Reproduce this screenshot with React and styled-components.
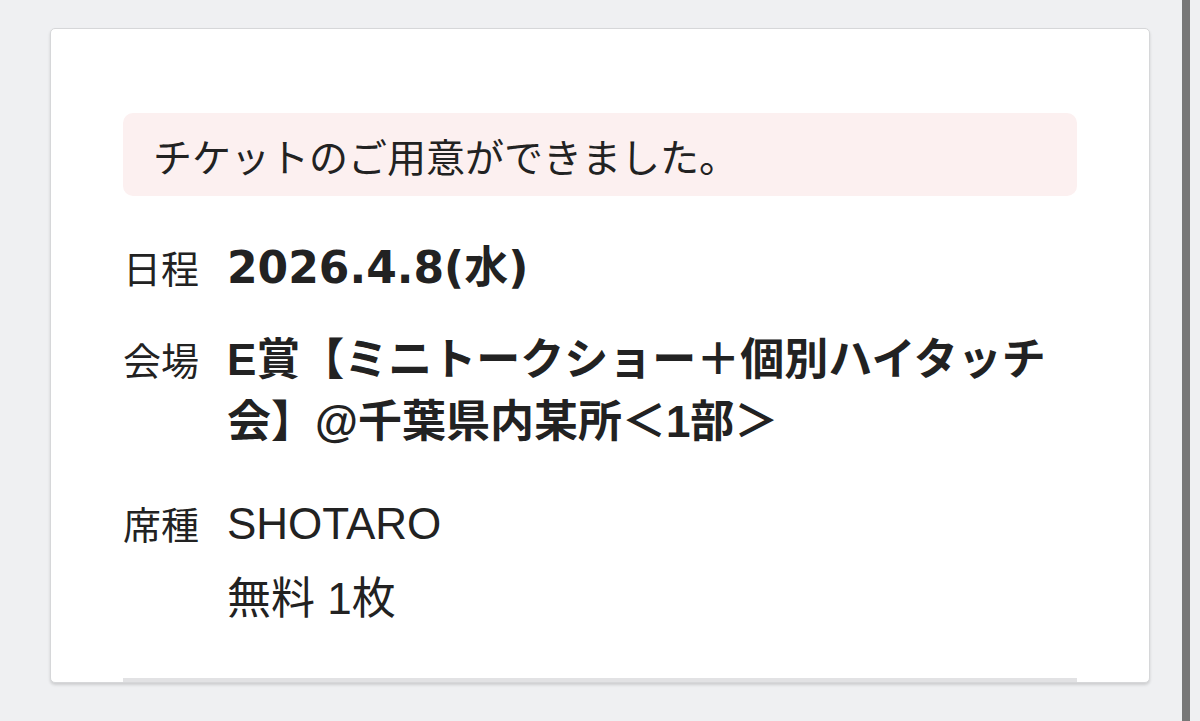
import React from 'react';
import styled, { createGlobalStyle } from 'styled-components';

const GlobalStyle = createGlobalStyle`
  html, body {
    margin: 0;
    padding: 0;
    background: #eff0f2;
  }
  body {
    font-family: "DejaVu Sans", "Noto Sans CJK JP", sans-serif;
    color: #222222;
  }
`;

const Page = styled.div`
  display: flex;
  height: 721px;
  overflow: hidden;
`;

const Main = styled.div`
  flex: 1;
  padding: 28px 32px 0 50px;
`;

const ScrollBar = styled.div`
  width: 8px;
  margin-right: 10px;
  background: #777777;
`;

const Card = styled.div`
  height: 655px;
  box-sizing: border-box;
  background: #ffffff;
  border: 1px solid #d6d7d9;
  border-radius: 5px;
  box-shadow: 0 2px 3px rgba(0, 0, 0, 0.14);
  padding: 84px 72px 0 72px;
  display: flex;
  flex-direction: column;
  overflow: hidden;
`;

const Notice = styled.div`
  background: #fcf0f0;
  border-radius: 10px;
  height: 83px;
  padding: 0 30px;
  display: flex;
  align-items: center;
  font-family: "Noto Sans CJK JP", sans-serif;
  font-size: 39px;
  color: #222222;
`;

const Details = styled.div`
  flex: 1;
  display: flex;
  flex-direction: column;
  padding-top: 40px;
`;

const Row = styled.div`
  display: flex;
  align-items: baseline;
  margin-top: ${p => p.$top || 0}px;
`;

const Label = styled.div`
  flex: 0 0 104px;
  font-family: "Noto Sans CJK JP", sans-serif;
  font-size: 38px;
  line-height: 62px;
  color: #222222;
`;

const Value = styled.div`
  flex: 1;
  font-family: ${p => (p.$wide ? '"DejaVu Sans", "Noto Sans CJK JP", sans-serif' : '"Liberation Sans", "Noto Sans CJK JP", sans-serif')};
  font-size: ${p => p.$size || 44}px;
  line-height: 62px;
  font-weight: ${p => (p.$bold ? 700 : 400)};
  color: #222222;
`;

const SubLine = styled.div`
  margin-top: 13px;
`;

const Divider = styled.div`
  height: 4px;
  background: #e2e2e4;
`;

export default function App() {
  return (
    <>
      <GlobalStyle />
      <Page>
        <Main>
          <Card>
            <Notice>チケットのご用意ができました。</Notice>
            <Details>
              <Row>
                <Label>日程</Label>
                <Value $bold $wide>2026.4.8(水)</Value>
              </Row>
              <Row $top={29}>
                <Label>会場</Label>
                <Value $bold>E賞【ミニトークショー＋個別ハイタッチ会】@千葉県内某所＜1部＞</Value>
              </Row>
              <Row $top={39}>
                <Label>席種</Label>
                <Value>
                  SHOTARO
                  <SubLine>無料 1枚</SubLine>
                </Value>
              </Row>
            </Details>
            <Divider />
          </Card>
        </Main>
        <ScrollBar />
      </Page>
    </>
  );
}
